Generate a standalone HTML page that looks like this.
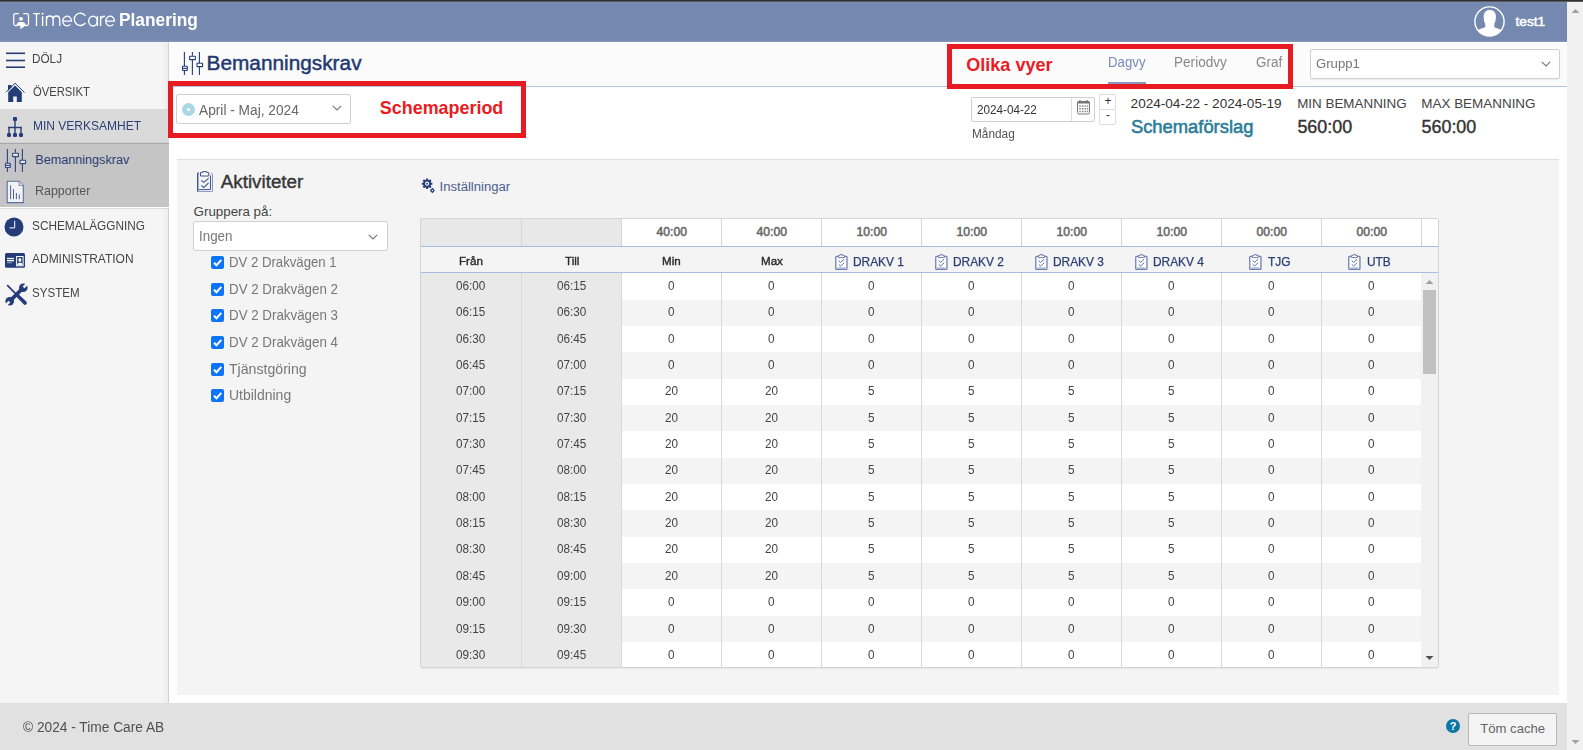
<!DOCTYPE html>
<html><head><meta charset="utf-8"><style>
html,body{margin:0;padding:0}
body{width:1583px;height:750px;overflow:hidden;position:relative;background:#fff;font-family:"Liberation Sans",sans-serif}
.t{position:absolute;white-space:nowrap;line-height:1}
div{box-sizing:content-box}
</style></head><body>
<div style="position:absolute;left:0px;top:0px;width:1583px;height:1px;background:#303030"></div>
<div style="position:absolute;left:0px;top:1px;width:1583px;height:1px;background:#5c5d60"></div>
<div style="position:absolute;left:0px;top:2px;width:1567px;height:40px;background:linear-gradient(#7b8db4 0px,#7589b0 1px,#7589b0 38px,#8193b6 39.5px,#dfe3ec 40px)"></div>
<div style="position:absolute;left:1567px;top:2px;width:16px;height:748px;background:#f1f1f1"></div>
<svg style="position:absolute;left:1571px;top:8px" width="9" height="6" viewBox="0 0 9 6"><path d="M0.5 5 L4.5 1 L8.5 5 Z" fill="#a3a3a3"/></svg>
<svg style="position:absolute;left:1571px;top:739px" width="9" height="6" viewBox="0 0 9 6"><path d="M0.5 1 L4.5 5 L8.5 1 Z" fill="#a3a3a3"/></svg>
<svg style="position:absolute;left:12px;top:12px" width="18" height="18" viewBox="0 0 18 18"><g fill="none" stroke="#fff" stroke-width="1.25"><path d="M6.8 1.7 H3.5 Q1.7 1.7 1.7 3.5 V11.7 Q1.7 13.5 3.5 13.5 H5"/><path d="M11.3 1.7 H14.7 Q16.5 1.7 16.5 3.5 V11.7 Q16.5 13.5 14.7 13.5 H13"/></g><circle cx="9" cy="6.8" r="1.9" fill="#fff"/><path d="M4.6 13.6 Q5.2 10 7.5 10 H10.5 Q12.8 10 13.8 13.3 L8.5 17.2 L8.3 13.6 Z" fill="#fff"/><path d="M4.6 12.9 H14" stroke="#fff" stroke-width="1.3"/></svg>
<svg style="position:absolute;left:30px;top:8px" width="90" height="24" viewBox="0 0 90 24"><g fill="none" stroke="#fff" stroke-width="1.35" stroke-linecap="butt"><path d="M3.1 5.6 H9.9 M6.5 5.6 V18"/><path d="M12.6 8.2 V18"/><path d="M16.5 8.2 V18 M16.5 11.8 Q16.5 8 19.8 8 Q23.1 8 23.1 11.8 V18 M23.1 11.8 Q23.1 8 26.4 8 Q29.7 8 29.7 11.8 V18"/><path d="M32.7 13.1 H41.5 A4.4 4.9 0 1 0 40.3 16.4"/><path d="M55.4 7.8 A6.1 6.15 0 1 0 55.4 14.9"/><ellipse cx="63" cy="13.1" rx="4.3" ry="4.9"/><path d="M67.4 8.2 V18"/><path d="M70.6 8.2 V18 M70.6 12 Q71 8.2 74.9 8.2"/><path d="M75.7 13.1 H84.5 A4.4 4.9 0 1 0 83.3 16.4"/></g><circle cx="12.6" cy="5.8" r="0.95" fill="#fff"/></svg>
<div class="t" style="left:118.50px;top:11.13px;font-size:18.16px;font-weight:700;color:#fff;transform:scaleX(0.9535);transform-origin:0 0;">Planering</div>
<svg style="position:absolute;left:1474px;top:6px" width="31" height="31" viewBox="0 0 31 31"><defs><clipPath id="cc"><circle cx="15.5" cy="15.5" r="14.5"/></clipPath></defs><circle cx="15.5" cy="15.5" r="14.6" fill="none" stroke="#fff" stroke-width="1.4"/><g clip-path="url(#cc)" fill="#fff"><path d="M15.8 4 C19.6 4 21.9 6.5 21.9 10.5 C21.9 13.5 21.4 15.8 20.4 17.6 L20.2 21.3 C23 22.5 27 23.2 29 25.7 L29 34 L2 34 L2 25.7 C4 23.2 8 22.5 11.3 21.3 L11.1 17.6 C10.1 15.8 9.7 13.5 9.7 10.5 C9.7 6.5 12 4 15.8 4 Z"/></g></svg>
<div class="t" style="left:1515.55px;top:15.00px;font-size:13.70px;font-weight:400;color:#fff;-webkit-text-stroke:0.50px #fff;">test1</div>
<div style="position:absolute;left:0px;top:42px;width:169px;height:661px;background:linear-gradient(to right,#f5f5f5 0px,#f5f5f5 162px,#ececec 168px,#d2d2d2 168px)"></div>
<div style="position:absolute;left:0px;top:109px;width:169px;height:33px;background:#dadada"></div>
<div style="position:absolute;left:0px;top:142px;width:169px;height:1px;background:#d0d0d0"></div>
<div style="position:absolute;left:0px;top:143px;width:169px;height:1px;background:#a9a9a9"></div>
<div style="position:absolute;left:0px;top:144px;width:169px;height:63px;background:#c5c5c5"></div>
<div style="position:absolute;left:0px;top:207px;width:169px;height:1px;background:#fdfdfd"></div>
<div style="position:absolute;left:0px;top:208px;width:168px;height:1px;background:#dcdcdc"></div>
<svg style="position:absolute;left:5px;top:51px" width="22" height="18" viewBox="0 0 22 18"><g stroke="#243d78" stroke-width="1.6"><path d="M1 2.3H20"/><path d="M1 9.5H20"/><path d="M1 16.2H20"/></g></svg>
<div class="t" style="left:32.40px;top:52.96px;font-size:12.57px;font-weight:400;color:#444;transform:scaleX(0.9341);transform-origin:0 0;">DÖLJ</div>
<svg style="position:absolute;left:5px;top:82px" width="21" height="21" viewBox="0 0 21 21"><path d="M10 1.2 L1 10.2" stroke="#243d78" stroke-width="1" fill="none"/><path d="M10 1.2 L19.5 10.5" stroke="#243d78" stroke-width="1" fill="none"/><path d="M3 3h3.5v2.6L3 9Z" fill="#243d78"/><path d="M3.2 10.2 L10 3.6 L16.8 10.2 V20 H11.8 V14.5 H8.2 V20 H3.2 Z" fill="#243d78"/></svg>
<div class="t" style="left:32.70px;top:85.76px;font-size:12.57px;font-weight:400;color:#444;transform:scaleX(0.8935);transform-origin:0 0;">ÖVERSIKT</div>
<svg style="position:absolute;left:6px;top:116px" width="19" height="22" viewBox="0 0 19 22"><g fill="#243d78"><rect x="7" y="1" width="4" height="4" rx="1"/><rect x="8.3" y="4" width="1.4" height="14"/><rect x="2.3" y="10.8" width="13.4" height="1.4"/><rect x="2.3" y="10.8" width="1.4" height="7"/><rect x="14.3" y="10.8" width="1.4" height="7"/><rect x="1" y="17" width="4" height="4" rx="1.3"/><rect x="7" y="17" width="4" height="4" rx="1.3"/><rect x="13" y="17" width="4" height="4" rx="1.3"/></g></svg>
<div class="t" style="left:32.70px;top:119.76px;font-size:12.57px;font-weight:400;color:#2b3f75;transform:scaleX(0.9547);transform-origin:0 0;">MIN VERKSAMHET</div>
<svg style="position:absolute;left:4px;top:148px" width="24" height="25" viewBox="0 0 24 25"><g stroke="#2d4580" stroke-width="1.1"><path d="M3.4 1v14M3.4 20v4"/><rect x="1.5" y="15.3" width="4.8" height="4.2" rx="0.4" fill="#e6e6e6"/><path d="M2 17.4H6"/><path d="M11.4 1v3.8M11.4 9v15"/><rect x="8.6" y="5.3" width="5.8" height="3.3" rx="0.4" fill="#e6e6e6"/><path d="M18.4 1v11M18.4 16v8"/><rect x="16" y="12.3" width="5.6" height="3.3" rx="0.4" fill="#e6e6e6"/></g></svg>
<div class="t" style="left:35.30px;top:153.92px;font-size:12.62px;font-weight:400;color:#2b3f75;">Bemanningskrav</div>
<svg style="position:absolute;left:6px;top:180px" width="19" height="24" viewBox="0 0 19 24"><path d="M1.2 1.2 H13 L17.3 5.5 V22.6 H1.2 Z" fill="#f2f2f2" stroke="#5b6fa3" stroke-width="1.1"/><path d="M13 1.2 V5.5 H17.3" fill="#dfe3ee" stroke="#5b6fa3" stroke-width="0.7"/><g stroke="#4a5f98" stroke-width="1"><path d="M4.6 5.3v13.9"/><path d="M7.5 9v10.2"/><path d="M10.4 13v6.2"/><path d="M13.3 14.5v4.7"/></g></svg>
<div class="t" style="left:35.30px;top:184.96px;font-size:12.57px;font-weight:400;color:#555;transform:scaleX(0.9910);transform-origin:0 0;">Rapporter</div>
<svg style="position:absolute;left:4px;top:217px" width="20" height="20" viewBox="0 0 20 20"><circle cx="10" cy="10" r="9.5" fill="#243d78"/><path d="M10.7 3.8 V10.9 H5.5" stroke="#fff" stroke-width="1" fill="none"/></svg>
<div class="t" style="left:32.30px;top:219.96px;font-size:12.57px;font-weight:400;color:#444;transform:scaleX(0.9406);transform-origin:0 0;">SCHEMALÄGGNING</div>
<svg style="position:absolute;left:5px;top:252px" width="20" height="17" viewBox="0 0 20 17"><rect x="0" y="1" width="20" height="14.7" rx="1.5" fill="#243d78"/><g fill="#fff"><rect x="2" y="5.9" width="7" height="1.3"/><rect x="2" y="8" width="7" height="1.3"/><rect x="2" y="10.2" width="5" height="1.1" fill-opacity="0.45"/></g><rect x="11.6" y="4.5" width="6.5" height="9.3" fill="none" stroke="#fff" stroke-width="1"/><ellipse cx="14.9" cy="7.9" rx="1.5" ry="1.9" fill="#fff"/><path d="M12.1 13.3 Q12.3 10.6 14.9 10.4 Q17.5 10.6 17.7 13.3 Z" fill="#fff"/></svg>
<div class="t" style="left:32.30px;top:253.06px;font-size:12.57px;font-weight:400;color:#444;transform:scaleX(0.9529);transform-origin:0 0;">ADMINISTRATION</div>
<svg style="position:absolute;left:5px;top:283px" width="23" height="23" viewBox="0 0 23 23"><defs><mask id="wm"><rect x="-2" y="-2" width="27" height="27" fill="#fff"/><path d="M17.65 3.51 L21.32 -0.16 L23.16 1.68 L19.49 5.35Z M3.51 17.65 L-0.16 21.32 L1.68 23.16 L5.35 19.49Z" fill="#000"/></mask></defs><g fill="#243d78"><path d="M1.6 2.8 L2.8 1.6 L12.2 11 L11 12.2 Z"/><path d="M11.2 13.6 L13.6 11.2 L21.3 18.6 Q22.6 20 21.3 21.3 Q20 22.6 18.6 21.3 Z"/><g mask="url(#wm)"><circle cx="18.3" cy="4.7" r="4.3"/><circle cx="4.7" cy="18.3" r="4.3"/><path d="M4.8 15.6 L15.6 4.8 L18.2 7.4 L7.4 18.2 Z"/></g></g></svg>
<div class="t" style="left:32.30px;top:287.26px;font-size:12.57px;font-weight:400;color:#444;transform:scaleX(0.9208);transform-origin:0 0;">SYSTEM</div>
<div style="position:absolute;left:169px;top:42px;width:1398px;height:44px;background:linear-gradient(#fff 0px,#fff 1px,#fbfbfb 1px)"></div>
<div style="position:absolute;left:169px;top:86px;width:1398px;height:1px;background:#b7c3dc"></div>
<svg style="position:absolute;left:181px;top:51px" width="24" height="25" viewBox="0 0 24 25"><g stroke="#243d78" stroke-width="1.1"><path d="M3.4 1v14M3.4 20v4"/><rect x="1.5" y="15.3" width="4.8" height="4.2" rx="0.4" fill="#fff"/><path d="M2 17.4H6"/><path d="M11.4 1v3.8M11.4 9v15"/><rect x="8.6" y="5.3" width="5.8" height="3.3" rx="0.4" fill="#fff"/><path d="M18.4 1v11M18.4 16v8"/><rect x="16" y="12.3" width="5.6" height="3.3" rx="0.4" fill="#fff"/></g></svg>
<div class="t" style="left:206.53px;top:53.18px;font-size:20.82px;font-weight:400;color:#22386f;-webkit-text-stroke:0.45px #22386f;">Bemanningskrav</div>
<div class="t" style="left:1108.30px;top:55.36px;font-size:14.11px;font-weight:400;color:#7a8bbd;transform:scaleX(0.9377);transform-origin:0 0;">Dagvy</div>
<div style="position:absolute;left:1108px;top:82px;width:38px;height:2px;background:#8797c0"></div>
<div class="t" style="left:1174.20px;top:55.36px;font-size:14.11px;font-weight:400;color:#888;transform:scaleX(0.9622);transform-origin:0 0;">Periodvy</div>
<div class="t" style="left:1255.70px;top:55.36px;font-size:14.11px;font-weight:400;color:#888;transform:scaleX(0.9573);transform-origin:0 0;">Graf</div>
<div style="position:absolute;left:1310px;top:49px;width:248px;height:28px;background:#fff;border:1px solid #d0d0d0;border-radius:2px;box-shadow:0 1px 1px rgba(0,0,0,0.06)"></div>
<div class="t" style="left:1315.80px;top:56.93px;font-size:13.55px;font-weight:400;color:#777;transform:scaleX(0.9694);transform-origin:0 0;">Grupp1</div>
<svg style="position:absolute;left:1541px;top:61px" width="10" height="6" viewBox="0 0 10 6"><path d="M0.8 0.8 L5 5 L9.2 0.8" fill="none" stroke="#777" stroke-width="1.2"/></svg>
<div class="t" style="left:966.20px;top:56.01px;font-size:18.07px;font-weight:700;color:#ea1b23;">Olika vyer</div>
<div style="position:absolute;left:176px;top:94px;width:173px;height:28px;background:#fff;border:1px solid #d0d0d0;border-radius:2px"></div>
<svg style="position:absolute;left:181px;top:102px" width="15" height="15" viewBox="0 0 15 15"><circle cx="7.5" cy="7.5" r="6.5" fill="#a9d7e5"/><circle cx="7.5" cy="7.5" r="1.6" fill="#fff"/></svg>
<div class="t" style="left:198.90px;top:102.56px;font-size:14.11px;font-weight:400;color:#666;transform:scaleX(0.9718);transform-origin:0 0;">April - Maj, 2024</div>
<svg style="position:absolute;left:332px;top:105px" width="10" height="6" viewBox="0 0 10 6"><path d="M0.8 0.8 L5 5 L9.2 0.8" fill="none" stroke="#777" stroke-width="1.2"/></svg>
<div class="t" style="left:379.80px;top:100.42px;font-size:17.93px;font-weight:700;color:#ea1b23;">Schemaperiod</div>
<div style="position:absolute;left:971px;top:97px;width:122px;height:23px;background:#fff;border:1px solid #d0d0d0;border-radius:2px"></div>
<div style="position:absolute;left:1071px;top:98px;width:1px;height:23px;background:#dcdcdc"></div>
<svg style="position:absolute;left:1076px;top:99px" width="15" height="17" viewBox="0 0 15 17"><g fill="none" stroke="#777" stroke-width="1"><rect x="1.5" y="2.5" width="12" height="12.5" rx="1.5"/></g><rect x="1.5" y="2.5" width="12" height="2" fill="#777"/><path d="M4 1v3M11 1v3" stroke="#777" stroke-width="1.2"/><g fill="#888"><rect x="3.2" y="6.3" width="1.6" height="1.5"/><rect x="5.9" y="6.3" width="1.6" height="1.5"/><rect x="8.6" y="6.3" width="1.6" height="1.5"/><rect x="11" y="6.3" width="1.2" height="1.5"/><rect x="3.2" y="9" width="1.6" height="1.5"/><rect x="5.9" y="9" width="1.6" height="1.5"/><rect x="8.6" y="9" width="1.6" height="1.5"/><rect x="11" y="9" width="1.2" height="1.5"/><rect x="3.2" y="11.7" width="1.6" height="1.5"/><rect x="5.9" y="11.7" width="1.6" height="1.5"/><rect x="8.6" y="11.7" width="1.6" height="1.5"/><rect x="11" y="11.7" width="1.2" height="1.5"/></g></svg>
<div class="t" style="left:977.00px;top:102.75px;font-size:13.41px;font-weight:400;color:#333;transform:scaleX(0.8720);transform-origin:0 0;">2024-04-22</div>
<div style="position:absolute;left:1099px;top:94px;width:15px;height:14px;background:#fff;border:1px solid #ddd;border-radius:2px"></div>
<div style="position:absolute;left:1099px;top:109px;width:15px;height:14px;background:#fff;border:1px solid #ddd;border-radius:2px"></div>
<div class="t" style="left:1104.49px;top:94.94px;font-size:12.00px;font-weight:400;color:#333;">+</div>
<div class="t" style="left:1106.01px;top:109.44px;font-size:12.00px;font-weight:400;color:#333;">-</div>
<div class="t" style="left:972.00px;top:127.68px;font-size:12.43px;font-weight:400;color:#555;transform:scaleX(0.9525);transform-origin:0 0;">Måndag</div>
<div class="t" style="left:1130.60px;top:96.91px;font-size:13.58px;font-weight:400;color:#333;">2024-04-22 - 2024-05-19</div>
<div class="t" style="left:1130.88px;top:118.03px;font-size:18.39px;font-weight:400;color:#2a7d99;-webkit-text-stroke:0.55px #2a7d99;">Schemaförslag</div>
<div class="t" style="left:1297.20px;top:97.25px;font-size:13.41px;font-weight:400;color:#444;">MIN BEMANNING</div>
<div class="t" style="left:1297.40px;top:119.23px;font-size:17.92px;font-weight:400;color:#333;-webkit-text-stroke:0.40px #333;">560:00</div>
<div class="t" style="left:1421.30px;top:97.23px;font-size:13.44px;font-weight:400;color:#444;">MAX BEMANNING</div>
<div class="t" style="left:1421.50px;top:119.23px;font-size:17.92px;font-weight:400;color:#333;-webkit-text-stroke:0.40px #333;">560:00</div>
<div style="position:absolute;left:168px;top:81px;width:348px;height:47px;border:5px solid #e81a22"></div>
<div style="position:absolute;left:947px;top:44px;width:336px;height:35px;border:5px solid #e81a22"></div>
<div style="position:absolute;left:177px;top:159px;width:1382px;height:535px;background:#f4f4f4;border-top:1px solid #dedede"></div>
<svg style="position:absolute;left:196px;top:171px" width="17" height="21" viewBox="0 0 17 21"><g fill="none" stroke-width="1"><path d="M1.7 20.6 V3 Q1.7 2 2.8 2" stroke="#3b5490" stroke-width="1.4"/><path d="M1.7 20.6 H15.8 Q16.5 20.6 16.5 19.8 V3.3 Q16.5 2.4 15.3 2.4" stroke="#3b5490" stroke-opacity="0.6"/><path d="M2.7 18.6 H14.5 V4.5" stroke="#3b5490"/><path d="M4.5 5 V1.6 H6.7 V0.6 H10.8 V1.6 H12.8 V5 Z" stroke="#3b5490" fill="#fff" fill-opacity="0.5"/><path d="M5.3 9.3 L7.8 11.4 L12.6 7.3 M5.3 14.4 L7.8 16.4 L12.6 11.9" stroke="#3b5490" stroke-width="1.1"/></g></svg>
<div class="t" style="left:220.80px;top:173.29px;font-size:18.79px;font-weight:400;color:#363636;-webkit-text-stroke:0.40px #363636;">Aktiviteter</div>
<div class="t" style="left:193.60px;top:205.41px;font-size:13.34px;font-weight:400;color:#444;">Gruppera på:</div>
<div style="position:absolute;left:193px;top:221px;width:193px;height:28px;background:#fff;border:1px solid #d0d0d0;border-radius:2px"></div>
<div class="t" style="left:198.90px;top:229.80px;font-size:13.83px;font-weight:400;color:#777;transform:scaleX(0.9682);transform-origin:0 0;">Ingen</div>
<svg style="position:absolute;left:368px;top:234px" width="10" height="6" viewBox="0 0 10 6"><path d="M0.8 0.8 L5 5 L9.2 0.8" fill="none" stroke="#777" stroke-width="1.2"/></svg>
<svg style="position:absolute;left:211px;top:256px" width="13" height="13" viewBox="0 0 13 13"><rect x="0" y="0" width="13" height="13" rx="2" fill="#0b74f8"/><path d="M3 6.7 L5.5 9.2 L10.3 3.8" fill="none" stroke="#fff" stroke-width="2"/></svg>
<div class="t" style="left:229.10px;top:255.17px;font-size:14.80px;font-weight:400;color:#777;transform:scaleX(0.8904);transform-origin:0 0;">DV 2 Drakvägen 1</div>
<svg style="position:absolute;left:211px;top:283px" width="13" height="13" viewBox="0 0 13 13"><rect x="0" y="0" width="13" height="13" rx="2" fill="#0b74f8"/><path d="M3 6.7 L5.5 9.2 L10.3 3.8" fill="none" stroke="#fff" stroke-width="2"/></svg>
<div class="t" style="left:229.10px;top:281.81px;font-size:14.80px;font-weight:400;color:#777;transform:scaleX(0.9012);transform-origin:0 0;">DV 2 Drakvägen 2</div>
<svg style="position:absolute;left:211px;top:309px" width="13" height="13" viewBox="0 0 13 13"><rect x="0" y="0" width="13" height="13" rx="2" fill="#0b74f8"/><path d="M3 6.7 L5.5 9.2 L10.3 3.8" fill="none" stroke="#fff" stroke-width="2"/></svg>
<div class="t" style="left:229.10px;top:308.45px;font-size:14.80px;font-weight:400;color:#777;transform:scaleX(0.9012);transform-origin:0 0;">DV 2 Drakvägen 3</div>
<svg style="position:absolute;left:211px;top:336px" width="13" height="13" viewBox="0 0 13 13"><rect x="0" y="0" width="13" height="13" rx="2" fill="#0b74f8"/><path d="M3 6.7 L5.5 9.2 L10.3 3.8" fill="none" stroke="#fff" stroke-width="2"/></svg>
<div class="t" style="left:229.10px;top:335.09px;font-size:14.80px;font-weight:400;color:#777;transform:scaleX(0.9012);transform-origin:0 0;">DV 2 Drakvägen 4</div>
<svg style="position:absolute;left:211px;top:363px" width="13" height="13" viewBox="0 0 13 13"><rect x="0" y="0" width="13" height="13" rx="2" fill="#0b74f8"/><path d="M3 6.7 L5.5 9.2 L10.3 3.8" fill="none" stroke="#fff" stroke-width="2"/></svg>
<div class="t" style="left:229.10px;top:361.73px;font-size:14.80px;font-weight:400;color:#777;transform:scaleX(0.9538);transform-origin:0 0;">Tjänstgöring</div>
<svg style="position:absolute;left:211px;top:389px" width="13" height="13" viewBox="0 0 13 13"><rect x="0" y="0" width="13" height="13" rx="2" fill="#0b74f8"/><path d="M3 6.7 L5.5 9.2 L10.3 3.8" fill="none" stroke="#fff" stroke-width="2"/></svg>
<div class="t" style="left:229.10px;top:388.37px;font-size:14.80px;font-weight:400;color:#777;transform:scaleX(0.9447);transform-origin:0 0;">Utbildning</div>
<svg style="position:absolute;left:421px;top:178px" width="16" height="16" viewBox="0 0 16 16"><g fill="#243d78"><circle cx="6.1" cy="5.7" r="3.9"/><g stroke="#243d78" stroke-width="2"><path d="M6.1 0.4v10.6M0.8 5.7h10.6M2.35 1.95l7.5 7.5M9.85 1.95l-7.5 7.5"/></g></g><circle cx="6.1" cy="5.7" r="2.1" fill="#f4f4f4"/><circle cx="6.1" cy="5.7" r="0.9" fill="#243d78"/><g fill="#243d78"><path d="M11.4 9.7 L13.7 12.5 L11.4 15.3 L9.1 12.5 Z"/><circle cx="11.4" cy="12.5" r="1.9"/></g><circle cx="11.4" cy="12.5" r="0.8" fill="#f4f4f4"/></svg>
<div class="t" style="left:439.50px;top:179.70px;font-size:13.11px;font-weight:400;color:#4a5d8e;">Inställningar</div>
<div style="position:absolute;left:420px;top:218px;width:1019px;height:450px;background:#fff"></div>
<div style="position:absolute;left:420px;top:218px;width:201px;height:28px;background:#e8e8e8"></div>
<div style="position:absolute;left:521px;top:218px;width:1px;height:28px;background:#d6d6d6"></div>
<div style="position:absolute;left:621px;top:218px;width:1px;height:28px;background:#d6d6d6"></div>
<div style="position:absolute;left:721px;top:218px;width:1px;height:28px;background:#d6d6d6"></div>
<div style="position:absolute;left:821px;top:218px;width:1px;height:28px;background:#d6d6d6"></div>
<div style="position:absolute;left:921px;top:218px;width:1px;height:28px;background:#d6d6d6"></div>
<div style="position:absolute;left:1021px;top:218px;width:1px;height:28px;background:#d6d6d6"></div>
<div style="position:absolute;left:1121px;top:218px;width:1px;height:28px;background:#d6d6d6"></div>
<div style="position:absolute;left:1221px;top:218px;width:1px;height:28px;background:#d6d6d6"></div>
<div style="position:absolute;left:1321px;top:218px;width:1px;height:28px;background:#d6d6d6"></div>
<div style="position:absolute;left:1421px;top:218px;width:1px;height:28px;background:#d6d6d6"></div>
<div class="t" style="left:656.48px;top:226.07px;font-size:12.20px;font-weight:400;color:#666;-webkit-text-stroke:0.50px #666;">40:00</div>
<div class="t" style="left:756.48px;top:226.07px;font-size:12.20px;font-weight:400;color:#666;-webkit-text-stroke:0.50px #666;">40:00</div>
<div class="t" style="left:856.48px;top:226.07px;font-size:12.20px;font-weight:400;color:#666;-webkit-text-stroke:0.50px #666;">10:00</div>
<div class="t" style="left:956.48px;top:226.07px;font-size:12.20px;font-weight:400;color:#666;-webkit-text-stroke:0.50px #666;">10:00</div>
<div class="t" style="left:1056.48px;top:226.07px;font-size:12.20px;font-weight:400;color:#666;-webkit-text-stroke:0.50px #666;">10:00</div>
<div class="t" style="left:1156.48px;top:226.07px;font-size:12.20px;font-weight:400;color:#666;-webkit-text-stroke:0.50px #666;">10:00</div>
<div class="t" style="left:1256.48px;top:226.07px;font-size:12.20px;font-weight:400;color:#666;-webkit-text-stroke:0.50px #666;">00:00</div>
<div class="t" style="left:1356.48px;top:226.07px;font-size:12.20px;font-weight:400;color:#666;-webkit-text-stroke:0.50px #666;">00:00</div>
<div style="position:absolute;left:420px;top:246px;width:1019px;height:1px;background:#a8bbe0"></div>
<div style="position:absolute;left:420px;top:247px;width:1019px;height:25px;background:#f4f4f4"></div>
<div style="position:absolute;left:420px;top:272px;width:1019px;height:1px;background:#a8bbe0"></div>
<div class="t" style="left:459.28px;top:255.17px;font-size:11.73px;font-weight:400;color:#2a2a2a;-webkit-text-stroke:0.40px #2a2a2a;transform:scaleX(0.9888);transform-origin:0 0;">Från</div>
<div class="t" style="left:564.51px;top:255.17px;font-size:11.73px;font-weight:400;color:#2a2a2a;-webkit-text-stroke:0.40px #2a2a2a;transform:scaleX(0.9888);transform-origin:0 0;">Till</div>
<div class="t" style="left:662.35px;top:255.17px;font-size:11.73px;font-weight:400;color:#2a2a2a;-webkit-text-stroke:0.40px #2a2a2a;transform:scaleX(0.9888);transform-origin:0 0;">Min</div>
<div class="t" style="left:760.74px;top:255.17px;font-size:11.73px;font-weight:400;color:#2a2a2a;-webkit-text-stroke:0.40px #2a2a2a;transform:scaleX(0.9888);transform-origin:0 0;">Max</div>
<svg style="position:absolute;left:834.5px;top:254px" width="13" height="16" viewBox="0 0 13 16"><rect x="0.75" y="2.4" width="11.2" height="13" rx="0.8" fill="#fff" stroke="#6d80b0" stroke-width="1.3"/><path d="M2.3 14 H10.4" stroke="#6d80b0" stroke-width="0.8" fill="none"/><path d="M3.3 3.6 V1.6 H5 V0.65 H7.7 V1.6 H9.4 V3.6 Z" fill="#fff" stroke="#6d80b0" stroke-width="1"/><path d="M3.7 6.7 L5.6 8.4 L9.1 5.2 M3.7 10.3 L5.6 12 L9.1 8.8" fill="none" stroke="#4b5f96" stroke-width="0.9"/></svg>
<div class="t" style="left:853.31px;top:255.87px;font-size:12.08px;font-weight:400;color:#2b3f75;-webkit-text-stroke:0.25px #2b3f75;transform:scaleX(0.9850);transform-origin:0 0;">DRAKV 1</div>
<svg style="position:absolute;left:934.5px;top:254px" width="13" height="16" viewBox="0 0 13 16"><rect x="0.75" y="2.4" width="11.2" height="13" rx="0.8" fill="#fff" stroke="#6d80b0" stroke-width="1.3"/><path d="M2.3 14 H10.4" stroke="#6d80b0" stroke-width="0.8" fill="none"/><path d="M3.3 3.6 V1.6 H5 V0.65 H7.7 V1.6 H9.4 V3.6 Z" fill="#fff" stroke="#6d80b0" stroke-width="1"/><path d="M3.7 6.7 L5.6 8.4 L9.1 5.2 M3.7 10.3 L5.6 12 L9.1 8.8" fill="none" stroke="#4b5f96" stroke-width="0.9"/></svg>
<div class="t" style="left:953.31px;top:255.87px;font-size:12.08px;font-weight:400;color:#2b3f75;-webkit-text-stroke:0.25px #2b3f75;transform:scaleX(0.9850);transform-origin:0 0;">DRAKV 2</div>
<svg style="position:absolute;left:1034.5px;top:254px" width="13" height="16" viewBox="0 0 13 16"><rect x="0.75" y="2.4" width="11.2" height="13" rx="0.8" fill="#fff" stroke="#6d80b0" stroke-width="1.3"/><path d="M2.3 14 H10.4" stroke="#6d80b0" stroke-width="0.8" fill="none"/><path d="M3.3 3.6 V1.6 H5 V0.65 H7.7 V1.6 H9.4 V3.6 Z" fill="#fff" stroke="#6d80b0" stroke-width="1"/><path d="M3.7 6.7 L5.6 8.4 L9.1 5.2 M3.7 10.3 L5.6 12 L9.1 8.8" fill="none" stroke="#4b5f96" stroke-width="0.9"/></svg>
<div class="t" style="left:1053.31px;top:255.87px;font-size:12.08px;font-weight:400;color:#2b3f75;-webkit-text-stroke:0.25px #2b3f75;transform:scaleX(0.9850);transform-origin:0 0;">DRAKV 3</div>
<svg style="position:absolute;left:1134.5px;top:254px" width="13" height="16" viewBox="0 0 13 16"><rect x="0.75" y="2.4" width="11.2" height="13" rx="0.8" fill="#fff" stroke="#6d80b0" stroke-width="1.3"/><path d="M2.3 14 H10.4" stroke="#6d80b0" stroke-width="0.8" fill="none"/><path d="M3.3 3.6 V1.6 H5 V0.65 H7.7 V1.6 H9.4 V3.6 Z" fill="#fff" stroke="#6d80b0" stroke-width="1"/><path d="M3.7 6.7 L5.6 8.4 L9.1 5.2 M3.7 10.3 L5.6 12 L9.1 8.8" fill="none" stroke="#4b5f96" stroke-width="0.9"/></svg>
<div class="t" style="left:1153.31px;top:255.87px;font-size:12.08px;font-weight:400;color:#2b3f75;-webkit-text-stroke:0.25px #2b3f75;transform:scaleX(0.9850);transform-origin:0 0;">DRAKV 4</div>
<svg style="position:absolute;left:1248.5px;top:254px" width="13" height="16" viewBox="0 0 13 16"><rect x="0.75" y="2.4" width="11.2" height="13" rx="0.8" fill="#fff" stroke="#6d80b0" stroke-width="1.3"/><path d="M2.3 14 H10.4" stroke="#6d80b0" stroke-width="0.8" fill="none"/><path d="M3.3 3.6 V1.6 H5 V0.65 H7.7 V1.6 H9.4 V3.6 Z" fill="#fff" stroke="#6d80b0" stroke-width="1"/><path d="M3.7 6.7 L5.6 8.4 L9.1 5.2 M3.7 10.3 L5.6 12 L9.1 8.8" fill="none" stroke="#4b5f96" stroke-width="0.9"/></svg>
<div class="t" style="left:1267.54px;top:255.87px;font-size:12.08px;font-weight:400;color:#2b3f75;-webkit-text-stroke:0.25px #2b3f75;transform:scaleX(0.9850);transform-origin:0 0;">TJG</div>
<svg style="position:absolute;left:1348.0px;top:254px" width="13" height="16" viewBox="0 0 13 16"><rect x="0.75" y="2.4" width="11.2" height="13" rx="0.8" fill="#fff" stroke="#6d80b0" stroke-width="1.3"/><path d="M2.3 14 H10.4" stroke="#6d80b0" stroke-width="0.8" fill="none"/><path d="M3.3 3.6 V1.6 H5 V0.65 H7.7 V1.6 H9.4 V3.6 Z" fill="#fff" stroke="#6d80b0" stroke-width="1"/><path d="M3.7 6.7 L5.6 8.4 L9.1 5.2 M3.7 10.3 L5.6 12 L9.1 8.8" fill="none" stroke="#4b5f96" stroke-width="0.9"/></svg>
<div class="t" style="left:1366.88px;top:255.87px;font-size:12.08px;font-weight:400;color:#2b3f75;-webkit-text-stroke:0.25px #2b3f75;transform:scaleX(0.9850);transform-origin:0 0;">UTB</div>
<div style="position:absolute;left:621px;top:273.20px;width:800px;height:26.35px;background:#ffffff"></div>
<div style="position:absolute;left:621px;top:299.55px;width:800px;height:26.35px;background:#f4f4f4"></div>
<div style="position:absolute;left:621px;top:325.90px;width:800px;height:26.35px;background:#ffffff"></div>
<div style="position:absolute;left:621px;top:352.25px;width:800px;height:26.35px;background:#f4f4f4"></div>
<div style="position:absolute;left:621px;top:378.60px;width:800px;height:26.35px;background:#ffffff"></div>
<div style="position:absolute;left:621px;top:404.95px;width:800px;height:26.35px;background:#f4f4f4"></div>
<div style="position:absolute;left:621px;top:431.30px;width:800px;height:26.35px;background:#ffffff"></div>
<div style="position:absolute;left:621px;top:457.65px;width:800px;height:26.35px;background:#f4f4f4"></div>
<div style="position:absolute;left:621px;top:484.00px;width:800px;height:26.35px;background:#ffffff"></div>
<div style="position:absolute;left:621px;top:510.35px;width:800px;height:26.35px;background:#f4f4f4"></div>
<div style="position:absolute;left:621px;top:536.70px;width:800px;height:26.35px;background:#ffffff"></div>
<div style="position:absolute;left:621px;top:563.05px;width:800px;height:26.35px;background:#f4f4f4"></div>
<div style="position:absolute;left:621px;top:589.40px;width:800px;height:26.35px;background:#ffffff"></div>
<div style="position:absolute;left:621px;top:615.75px;width:800px;height:26.35px;background:#f4f4f4"></div>
<div style="position:absolute;left:621px;top:642.10px;width:800px;height:24.90px;background:#ffffff"></div>
<div style="position:absolute;left:420px;top:273px;width:201px;height:394px;background:#e9e9e9"></div>
<div style="position:absolute;left:521px;top:273px;width:1px;height:394px;background:#d9d9d9"></div>
<div style="position:absolute;left:621px;top:273px;width:1px;height:394px;background:#d9d9d9"></div>
<div style="position:absolute;left:721px;top:273px;width:1px;height:394px;background:#d9d9d9"></div>
<div style="position:absolute;left:821px;top:273px;width:1px;height:394px;background:#d9d9d9"></div>
<div style="position:absolute;left:921px;top:273px;width:1px;height:394px;background:#d9d9d9"></div>
<div style="position:absolute;left:1021px;top:273px;width:1px;height:394px;background:#d9d9d9"></div>
<div style="position:absolute;left:1121px;top:273px;width:1px;height:394px;background:#d9d9d9"></div>
<div style="position:absolute;left:1221px;top:273px;width:1px;height:394px;background:#d9d9d9"></div>
<div style="position:absolute;left:1321px;top:273px;width:1px;height:394px;background:#d9d9d9"></div>
<div style="position:absolute;left:1421px;top:273px;width:1px;height:394px;background:#d9d9d9"></div>
<div style="position:absolute;left:1421px;top:273px;width:17px;height:394px;background:#f1f1f1"></div>
<svg style="position:absolute;left:1425px;top:279px" width="9" height="6" viewBox="0 0 9 6"><path d="M0.5 5 L4.5 1 L8.5 5 Z" fill="#a3a3a3"/></svg>
<div style="position:absolute;left:1423px;top:290px;width:13px;height:84px;background:#c1c1c1"></div>
<svg style="position:absolute;left:1425px;top:655px" width="9" height="6" viewBox="0 0 9 6"><path d="M0.5 1 L4.5 5 L8.5 1 Z" fill="#505050"/></svg>
<div class="t" style="left:456.34px;top:279.96px;font-size:12.57px;font-weight:400;color:#444;transform:scaleX(0.9324);transform-origin:0 0;">06:00</div>
<div class="t" style="left:556.84px;top:279.96px;font-size:12.57px;font-weight:400;color:#444;transform:scaleX(0.9324);transform-origin:0 0;">06:15</div>
<div class="t" style="left:668.25px;top:279.96px;font-size:12.57px;font-weight:400;color:#444;transform:scaleX(0.9324);transform-origin:0 0;">0</div>
<div class="t" style="left:768.25px;top:279.96px;font-size:12.57px;font-weight:400;color:#444;transform:scaleX(0.9324);transform-origin:0 0;">0</div>
<div class="t" style="left:868.25px;top:279.96px;font-size:12.57px;font-weight:400;color:#444;transform:scaleX(0.9324);transform-origin:0 0;">0</div>
<div class="t" style="left:968.25px;top:279.96px;font-size:12.57px;font-weight:400;color:#444;transform:scaleX(0.9324);transform-origin:0 0;">0</div>
<div class="t" style="left:1068.25px;top:279.96px;font-size:12.57px;font-weight:400;color:#444;transform:scaleX(0.9324);transform-origin:0 0;">0</div>
<div class="t" style="left:1168.25px;top:279.96px;font-size:12.57px;font-weight:400;color:#444;transform:scaleX(0.9324);transform-origin:0 0;">0</div>
<div class="t" style="left:1268.25px;top:279.96px;font-size:12.57px;font-weight:400;color:#444;transform:scaleX(0.9324);transform-origin:0 0;">0</div>
<div class="t" style="left:1368.25px;top:279.96px;font-size:12.57px;font-weight:400;color:#444;transform:scaleX(0.9324);transform-origin:0 0;">0</div>
<div class="t" style="left:456.34px;top:306.31px;font-size:12.57px;font-weight:400;color:#444;transform:scaleX(0.9324);transform-origin:0 0;">06:15</div>
<div class="t" style="left:556.84px;top:306.31px;font-size:12.57px;font-weight:400;color:#444;transform:scaleX(0.9324);transform-origin:0 0;">06:30</div>
<div class="t" style="left:668.25px;top:306.31px;font-size:12.57px;font-weight:400;color:#444;transform:scaleX(0.9324);transform-origin:0 0;">0</div>
<div class="t" style="left:768.25px;top:306.31px;font-size:12.57px;font-weight:400;color:#444;transform:scaleX(0.9324);transform-origin:0 0;">0</div>
<div class="t" style="left:868.25px;top:306.31px;font-size:12.57px;font-weight:400;color:#444;transform:scaleX(0.9324);transform-origin:0 0;">0</div>
<div class="t" style="left:968.25px;top:306.31px;font-size:12.57px;font-weight:400;color:#444;transform:scaleX(0.9324);transform-origin:0 0;">0</div>
<div class="t" style="left:1068.25px;top:306.31px;font-size:12.57px;font-weight:400;color:#444;transform:scaleX(0.9324);transform-origin:0 0;">0</div>
<div class="t" style="left:1168.25px;top:306.31px;font-size:12.57px;font-weight:400;color:#444;transform:scaleX(0.9324);transform-origin:0 0;">0</div>
<div class="t" style="left:1268.25px;top:306.31px;font-size:12.57px;font-weight:400;color:#444;transform:scaleX(0.9324);transform-origin:0 0;">0</div>
<div class="t" style="left:1368.25px;top:306.31px;font-size:12.57px;font-weight:400;color:#444;transform:scaleX(0.9324);transform-origin:0 0;">0</div>
<div class="t" style="left:456.34px;top:332.66px;font-size:12.57px;font-weight:400;color:#444;transform:scaleX(0.9324);transform-origin:0 0;">06:30</div>
<div class="t" style="left:556.84px;top:332.66px;font-size:12.57px;font-weight:400;color:#444;transform:scaleX(0.9324);transform-origin:0 0;">06:45</div>
<div class="t" style="left:668.25px;top:332.66px;font-size:12.57px;font-weight:400;color:#444;transform:scaleX(0.9324);transform-origin:0 0;">0</div>
<div class="t" style="left:768.25px;top:332.66px;font-size:12.57px;font-weight:400;color:#444;transform:scaleX(0.9324);transform-origin:0 0;">0</div>
<div class="t" style="left:868.25px;top:332.66px;font-size:12.57px;font-weight:400;color:#444;transform:scaleX(0.9324);transform-origin:0 0;">0</div>
<div class="t" style="left:968.25px;top:332.66px;font-size:12.57px;font-weight:400;color:#444;transform:scaleX(0.9324);transform-origin:0 0;">0</div>
<div class="t" style="left:1068.25px;top:332.66px;font-size:12.57px;font-weight:400;color:#444;transform:scaleX(0.9324);transform-origin:0 0;">0</div>
<div class="t" style="left:1168.25px;top:332.66px;font-size:12.57px;font-weight:400;color:#444;transform:scaleX(0.9324);transform-origin:0 0;">0</div>
<div class="t" style="left:1268.25px;top:332.66px;font-size:12.57px;font-weight:400;color:#444;transform:scaleX(0.9324);transform-origin:0 0;">0</div>
<div class="t" style="left:1368.25px;top:332.66px;font-size:12.57px;font-weight:400;color:#444;transform:scaleX(0.9324);transform-origin:0 0;">0</div>
<div class="t" style="left:456.34px;top:359.01px;font-size:12.57px;font-weight:400;color:#444;transform:scaleX(0.9324);transform-origin:0 0;">06:45</div>
<div class="t" style="left:556.84px;top:359.01px;font-size:12.57px;font-weight:400;color:#444;transform:scaleX(0.9324);transform-origin:0 0;">07:00</div>
<div class="t" style="left:668.25px;top:359.01px;font-size:12.57px;font-weight:400;color:#444;transform:scaleX(0.9324);transform-origin:0 0;">0</div>
<div class="t" style="left:768.25px;top:359.01px;font-size:12.57px;font-weight:400;color:#444;transform:scaleX(0.9324);transform-origin:0 0;">0</div>
<div class="t" style="left:868.25px;top:359.01px;font-size:12.57px;font-weight:400;color:#444;transform:scaleX(0.9324);transform-origin:0 0;">0</div>
<div class="t" style="left:968.25px;top:359.01px;font-size:12.57px;font-weight:400;color:#444;transform:scaleX(0.9324);transform-origin:0 0;">0</div>
<div class="t" style="left:1068.25px;top:359.01px;font-size:12.57px;font-weight:400;color:#444;transform:scaleX(0.9324);transform-origin:0 0;">0</div>
<div class="t" style="left:1168.25px;top:359.01px;font-size:12.57px;font-weight:400;color:#444;transform:scaleX(0.9324);transform-origin:0 0;">0</div>
<div class="t" style="left:1268.25px;top:359.01px;font-size:12.57px;font-weight:400;color:#444;transform:scaleX(0.9324);transform-origin:0 0;">0</div>
<div class="t" style="left:1368.25px;top:359.01px;font-size:12.57px;font-weight:400;color:#444;transform:scaleX(0.9324);transform-origin:0 0;">0</div>
<div class="t" style="left:456.34px;top:385.36px;font-size:12.57px;font-weight:400;color:#444;transform:scaleX(0.9324);transform-origin:0 0;">07:00</div>
<div class="t" style="left:556.84px;top:385.36px;font-size:12.57px;font-weight:400;color:#444;transform:scaleX(0.9324);transform-origin:0 0;">07:15</div>
<div class="t" style="left:664.98px;top:385.36px;font-size:12.57px;font-weight:400;color:#444;transform:scaleX(0.9324);transform-origin:0 0;">20</div>
<div class="t" style="left:764.98px;top:385.36px;font-size:12.57px;font-weight:400;color:#444;transform:scaleX(0.9324);transform-origin:0 0;">20</div>
<div class="t" style="left:868.25px;top:385.36px;font-size:12.57px;font-weight:400;color:#444;transform:scaleX(0.9324);transform-origin:0 0;">5</div>
<div class="t" style="left:968.25px;top:385.36px;font-size:12.57px;font-weight:400;color:#444;transform:scaleX(0.9324);transform-origin:0 0;">5</div>
<div class="t" style="left:1068.25px;top:385.36px;font-size:12.57px;font-weight:400;color:#444;transform:scaleX(0.9324);transform-origin:0 0;">5</div>
<div class="t" style="left:1168.25px;top:385.36px;font-size:12.57px;font-weight:400;color:#444;transform:scaleX(0.9324);transform-origin:0 0;">5</div>
<div class="t" style="left:1268.25px;top:385.36px;font-size:12.57px;font-weight:400;color:#444;transform:scaleX(0.9324);transform-origin:0 0;">0</div>
<div class="t" style="left:1368.25px;top:385.36px;font-size:12.57px;font-weight:400;color:#444;transform:scaleX(0.9324);transform-origin:0 0;">0</div>
<div class="t" style="left:456.34px;top:411.71px;font-size:12.57px;font-weight:400;color:#444;transform:scaleX(0.9324);transform-origin:0 0;">07:15</div>
<div class="t" style="left:556.84px;top:411.71px;font-size:12.57px;font-weight:400;color:#444;transform:scaleX(0.9324);transform-origin:0 0;">07:30</div>
<div class="t" style="left:664.98px;top:411.71px;font-size:12.57px;font-weight:400;color:#444;transform:scaleX(0.9324);transform-origin:0 0;">20</div>
<div class="t" style="left:764.98px;top:411.71px;font-size:12.57px;font-weight:400;color:#444;transform:scaleX(0.9324);transform-origin:0 0;">20</div>
<div class="t" style="left:868.25px;top:411.71px;font-size:12.57px;font-weight:400;color:#444;transform:scaleX(0.9324);transform-origin:0 0;">5</div>
<div class="t" style="left:968.25px;top:411.71px;font-size:12.57px;font-weight:400;color:#444;transform:scaleX(0.9324);transform-origin:0 0;">5</div>
<div class="t" style="left:1068.25px;top:411.71px;font-size:12.57px;font-weight:400;color:#444;transform:scaleX(0.9324);transform-origin:0 0;">5</div>
<div class="t" style="left:1168.25px;top:411.71px;font-size:12.57px;font-weight:400;color:#444;transform:scaleX(0.9324);transform-origin:0 0;">5</div>
<div class="t" style="left:1268.25px;top:411.71px;font-size:12.57px;font-weight:400;color:#444;transform:scaleX(0.9324);transform-origin:0 0;">0</div>
<div class="t" style="left:1368.25px;top:411.71px;font-size:12.57px;font-weight:400;color:#444;transform:scaleX(0.9324);transform-origin:0 0;">0</div>
<div class="t" style="left:456.34px;top:438.06px;font-size:12.57px;font-weight:400;color:#444;transform:scaleX(0.9324);transform-origin:0 0;">07:30</div>
<div class="t" style="left:556.84px;top:438.06px;font-size:12.57px;font-weight:400;color:#444;transform:scaleX(0.9324);transform-origin:0 0;">07:45</div>
<div class="t" style="left:664.98px;top:438.06px;font-size:12.57px;font-weight:400;color:#444;transform:scaleX(0.9324);transform-origin:0 0;">20</div>
<div class="t" style="left:764.98px;top:438.06px;font-size:12.57px;font-weight:400;color:#444;transform:scaleX(0.9324);transform-origin:0 0;">20</div>
<div class="t" style="left:868.25px;top:438.06px;font-size:12.57px;font-weight:400;color:#444;transform:scaleX(0.9324);transform-origin:0 0;">5</div>
<div class="t" style="left:968.25px;top:438.06px;font-size:12.57px;font-weight:400;color:#444;transform:scaleX(0.9324);transform-origin:0 0;">5</div>
<div class="t" style="left:1068.25px;top:438.06px;font-size:12.57px;font-weight:400;color:#444;transform:scaleX(0.9324);transform-origin:0 0;">5</div>
<div class="t" style="left:1168.25px;top:438.06px;font-size:12.57px;font-weight:400;color:#444;transform:scaleX(0.9324);transform-origin:0 0;">5</div>
<div class="t" style="left:1268.25px;top:438.06px;font-size:12.57px;font-weight:400;color:#444;transform:scaleX(0.9324);transform-origin:0 0;">0</div>
<div class="t" style="left:1368.25px;top:438.06px;font-size:12.57px;font-weight:400;color:#444;transform:scaleX(0.9324);transform-origin:0 0;">0</div>
<div class="t" style="left:456.34px;top:464.41px;font-size:12.57px;font-weight:400;color:#444;transform:scaleX(0.9324);transform-origin:0 0;">07:45</div>
<div class="t" style="left:556.84px;top:464.41px;font-size:12.57px;font-weight:400;color:#444;transform:scaleX(0.9324);transform-origin:0 0;">08:00</div>
<div class="t" style="left:664.98px;top:464.41px;font-size:12.57px;font-weight:400;color:#444;transform:scaleX(0.9324);transform-origin:0 0;">20</div>
<div class="t" style="left:764.98px;top:464.41px;font-size:12.57px;font-weight:400;color:#444;transform:scaleX(0.9324);transform-origin:0 0;">20</div>
<div class="t" style="left:868.25px;top:464.41px;font-size:12.57px;font-weight:400;color:#444;transform:scaleX(0.9324);transform-origin:0 0;">5</div>
<div class="t" style="left:968.25px;top:464.41px;font-size:12.57px;font-weight:400;color:#444;transform:scaleX(0.9324);transform-origin:0 0;">5</div>
<div class="t" style="left:1068.25px;top:464.41px;font-size:12.57px;font-weight:400;color:#444;transform:scaleX(0.9324);transform-origin:0 0;">5</div>
<div class="t" style="left:1168.25px;top:464.41px;font-size:12.57px;font-weight:400;color:#444;transform:scaleX(0.9324);transform-origin:0 0;">5</div>
<div class="t" style="left:1268.25px;top:464.41px;font-size:12.57px;font-weight:400;color:#444;transform:scaleX(0.9324);transform-origin:0 0;">0</div>
<div class="t" style="left:1368.25px;top:464.41px;font-size:12.57px;font-weight:400;color:#444;transform:scaleX(0.9324);transform-origin:0 0;">0</div>
<div class="t" style="left:456.34px;top:490.76px;font-size:12.57px;font-weight:400;color:#444;transform:scaleX(0.9324);transform-origin:0 0;">08:00</div>
<div class="t" style="left:556.84px;top:490.76px;font-size:12.57px;font-weight:400;color:#444;transform:scaleX(0.9324);transform-origin:0 0;">08:15</div>
<div class="t" style="left:664.98px;top:490.76px;font-size:12.57px;font-weight:400;color:#444;transform:scaleX(0.9324);transform-origin:0 0;">20</div>
<div class="t" style="left:764.98px;top:490.76px;font-size:12.57px;font-weight:400;color:#444;transform:scaleX(0.9324);transform-origin:0 0;">20</div>
<div class="t" style="left:868.25px;top:490.76px;font-size:12.57px;font-weight:400;color:#444;transform:scaleX(0.9324);transform-origin:0 0;">5</div>
<div class="t" style="left:968.25px;top:490.76px;font-size:12.57px;font-weight:400;color:#444;transform:scaleX(0.9324);transform-origin:0 0;">5</div>
<div class="t" style="left:1068.25px;top:490.76px;font-size:12.57px;font-weight:400;color:#444;transform:scaleX(0.9324);transform-origin:0 0;">5</div>
<div class="t" style="left:1168.25px;top:490.76px;font-size:12.57px;font-weight:400;color:#444;transform:scaleX(0.9324);transform-origin:0 0;">5</div>
<div class="t" style="left:1268.25px;top:490.76px;font-size:12.57px;font-weight:400;color:#444;transform:scaleX(0.9324);transform-origin:0 0;">0</div>
<div class="t" style="left:1368.25px;top:490.76px;font-size:12.57px;font-weight:400;color:#444;transform:scaleX(0.9324);transform-origin:0 0;">0</div>
<div class="t" style="left:456.34px;top:517.11px;font-size:12.57px;font-weight:400;color:#444;transform:scaleX(0.9324);transform-origin:0 0;">08:15</div>
<div class="t" style="left:556.84px;top:517.11px;font-size:12.57px;font-weight:400;color:#444;transform:scaleX(0.9324);transform-origin:0 0;">08:30</div>
<div class="t" style="left:664.98px;top:517.11px;font-size:12.57px;font-weight:400;color:#444;transform:scaleX(0.9324);transform-origin:0 0;">20</div>
<div class="t" style="left:764.98px;top:517.11px;font-size:12.57px;font-weight:400;color:#444;transform:scaleX(0.9324);transform-origin:0 0;">20</div>
<div class="t" style="left:868.25px;top:517.11px;font-size:12.57px;font-weight:400;color:#444;transform:scaleX(0.9324);transform-origin:0 0;">5</div>
<div class="t" style="left:968.25px;top:517.11px;font-size:12.57px;font-weight:400;color:#444;transform:scaleX(0.9324);transform-origin:0 0;">5</div>
<div class="t" style="left:1068.25px;top:517.11px;font-size:12.57px;font-weight:400;color:#444;transform:scaleX(0.9324);transform-origin:0 0;">5</div>
<div class="t" style="left:1168.25px;top:517.11px;font-size:12.57px;font-weight:400;color:#444;transform:scaleX(0.9324);transform-origin:0 0;">5</div>
<div class="t" style="left:1268.25px;top:517.11px;font-size:12.57px;font-weight:400;color:#444;transform:scaleX(0.9324);transform-origin:0 0;">0</div>
<div class="t" style="left:1368.25px;top:517.11px;font-size:12.57px;font-weight:400;color:#444;transform:scaleX(0.9324);transform-origin:0 0;">0</div>
<div class="t" style="left:456.34px;top:543.46px;font-size:12.57px;font-weight:400;color:#444;transform:scaleX(0.9324);transform-origin:0 0;">08:30</div>
<div class="t" style="left:556.84px;top:543.46px;font-size:12.57px;font-weight:400;color:#444;transform:scaleX(0.9324);transform-origin:0 0;">08:45</div>
<div class="t" style="left:664.98px;top:543.46px;font-size:12.57px;font-weight:400;color:#444;transform:scaleX(0.9324);transform-origin:0 0;">20</div>
<div class="t" style="left:764.98px;top:543.46px;font-size:12.57px;font-weight:400;color:#444;transform:scaleX(0.9324);transform-origin:0 0;">20</div>
<div class="t" style="left:868.25px;top:543.46px;font-size:12.57px;font-weight:400;color:#444;transform:scaleX(0.9324);transform-origin:0 0;">5</div>
<div class="t" style="left:968.25px;top:543.46px;font-size:12.57px;font-weight:400;color:#444;transform:scaleX(0.9324);transform-origin:0 0;">5</div>
<div class="t" style="left:1068.25px;top:543.46px;font-size:12.57px;font-weight:400;color:#444;transform:scaleX(0.9324);transform-origin:0 0;">5</div>
<div class="t" style="left:1168.25px;top:543.46px;font-size:12.57px;font-weight:400;color:#444;transform:scaleX(0.9324);transform-origin:0 0;">5</div>
<div class="t" style="left:1268.25px;top:543.46px;font-size:12.57px;font-weight:400;color:#444;transform:scaleX(0.9324);transform-origin:0 0;">0</div>
<div class="t" style="left:1368.25px;top:543.46px;font-size:12.57px;font-weight:400;color:#444;transform:scaleX(0.9324);transform-origin:0 0;">0</div>
<div class="t" style="left:456.34px;top:569.81px;font-size:12.57px;font-weight:400;color:#444;transform:scaleX(0.9324);transform-origin:0 0;">08:45</div>
<div class="t" style="left:556.84px;top:569.81px;font-size:12.57px;font-weight:400;color:#444;transform:scaleX(0.9324);transform-origin:0 0;">09:00</div>
<div class="t" style="left:664.98px;top:569.81px;font-size:12.57px;font-weight:400;color:#444;transform:scaleX(0.9324);transform-origin:0 0;">20</div>
<div class="t" style="left:764.98px;top:569.81px;font-size:12.57px;font-weight:400;color:#444;transform:scaleX(0.9324);transform-origin:0 0;">20</div>
<div class="t" style="left:868.25px;top:569.81px;font-size:12.57px;font-weight:400;color:#444;transform:scaleX(0.9324);transform-origin:0 0;">5</div>
<div class="t" style="left:968.25px;top:569.81px;font-size:12.57px;font-weight:400;color:#444;transform:scaleX(0.9324);transform-origin:0 0;">5</div>
<div class="t" style="left:1068.25px;top:569.81px;font-size:12.57px;font-weight:400;color:#444;transform:scaleX(0.9324);transform-origin:0 0;">5</div>
<div class="t" style="left:1168.25px;top:569.81px;font-size:12.57px;font-weight:400;color:#444;transform:scaleX(0.9324);transform-origin:0 0;">5</div>
<div class="t" style="left:1268.25px;top:569.81px;font-size:12.57px;font-weight:400;color:#444;transform:scaleX(0.9324);transform-origin:0 0;">0</div>
<div class="t" style="left:1368.25px;top:569.81px;font-size:12.57px;font-weight:400;color:#444;transform:scaleX(0.9324);transform-origin:0 0;">0</div>
<div class="t" style="left:456.34px;top:596.16px;font-size:12.57px;font-weight:400;color:#444;transform:scaleX(0.9324);transform-origin:0 0;">09:00</div>
<div class="t" style="left:556.84px;top:596.16px;font-size:12.57px;font-weight:400;color:#444;transform:scaleX(0.9324);transform-origin:0 0;">09:15</div>
<div class="t" style="left:668.25px;top:596.16px;font-size:12.57px;font-weight:400;color:#444;transform:scaleX(0.9324);transform-origin:0 0;">0</div>
<div class="t" style="left:768.25px;top:596.16px;font-size:12.57px;font-weight:400;color:#444;transform:scaleX(0.9324);transform-origin:0 0;">0</div>
<div class="t" style="left:868.25px;top:596.16px;font-size:12.57px;font-weight:400;color:#444;transform:scaleX(0.9324);transform-origin:0 0;">0</div>
<div class="t" style="left:968.25px;top:596.16px;font-size:12.57px;font-weight:400;color:#444;transform:scaleX(0.9324);transform-origin:0 0;">0</div>
<div class="t" style="left:1068.25px;top:596.16px;font-size:12.57px;font-weight:400;color:#444;transform:scaleX(0.9324);transform-origin:0 0;">0</div>
<div class="t" style="left:1168.25px;top:596.16px;font-size:12.57px;font-weight:400;color:#444;transform:scaleX(0.9324);transform-origin:0 0;">0</div>
<div class="t" style="left:1268.25px;top:596.16px;font-size:12.57px;font-weight:400;color:#444;transform:scaleX(0.9324);transform-origin:0 0;">0</div>
<div class="t" style="left:1368.25px;top:596.16px;font-size:12.57px;font-weight:400;color:#444;transform:scaleX(0.9324);transform-origin:0 0;">0</div>
<div class="t" style="left:456.34px;top:622.51px;font-size:12.57px;font-weight:400;color:#444;transform:scaleX(0.9324);transform-origin:0 0;">09:15</div>
<div class="t" style="left:556.84px;top:622.51px;font-size:12.57px;font-weight:400;color:#444;transform:scaleX(0.9324);transform-origin:0 0;">09:30</div>
<div class="t" style="left:668.25px;top:622.51px;font-size:12.57px;font-weight:400;color:#444;transform:scaleX(0.9324);transform-origin:0 0;">0</div>
<div class="t" style="left:768.25px;top:622.51px;font-size:12.57px;font-weight:400;color:#444;transform:scaleX(0.9324);transform-origin:0 0;">0</div>
<div class="t" style="left:868.25px;top:622.51px;font-size:12.57px;font-weight:400;color:#444;transform:scaleX(0.9324);transform-origin:0 0;">0</div>
<div class="t" style="left:968.25px;top:622.51px;font-size:12.57px;font-weight:400;color:#444;transform:scaleX(0.9324);transform-origin:0 0;">0</div>
<div class="t" style="left:1068.25px;top:622.51px;font-size:12.57px;font-weight:400;color:#444;transform:scaleX(0.9324);transform-origin:0 0;">0</div>
<div class="t" style="left:1168.25px;top:622.51px;font-size:12.57px;font-weight:400;color:#444;transform:scaleX(0.9324);transform-origin:0 0;">0</div>
<div class="t" style="left:1268.25px;top:622.51px;font-size:12.57px;font-weight:400;color:#444;transform:scaleX(0.9324);transform-origin:0 0;">0</div>
<div class="t" style="left:1368.25px;top:622.51px;font-size:12.57px;font-weight:400;color:#444;transform:scaleX(0.9324);transform-origin:0 0;">0</div>
<div class="t" style="left:456.34px;top:648.86px;font-size:12.57px;font-weight:400;color:#444;transform:scaleX(0.9324);transform-origin:0 0;">09:30</div>
<div class="t" style="left:556.84px;top:648.86px;font-size:12.57px;font-weight:400;color:#444;transform:scaleX(0.9324);transform-origin:0 0;">09:45</div>
<div class="t" style="left:668.25px;top:648.86px;font-size:12.57px;font-weight:400;color:#444;transform:scaleX(0.9324);transform-origin:0 0;">0</div>
<div class="t" style="left:768.25px;top:648.86px;font-size:12.57px;font-weight:400;color:#444;transform:scaleX(0.9324);transform-origin:0 0;">0</div>
<div class="t" style="left:868.25px;top:648.86px;font-size:12.57px;font-weight:400;color:#444;transform:scaleX(0.9324);transform-origin:0 0;">0</div>
<div class="t" style="left:968.25px;top:648.86px;font-size:12.57px;font-weight:400;color:#444;transform:scaleX(0.9324);transform-origin:0 0;">0</div>
<div class="t" style="left:1068.25px;top:648.86px;font-size:12.57px;font-weight:400;color:#444;transform:scaleX(0.9324);transform-origin:0 0;">0</div>
<div class="t" style="left:1168.25px;top:648.86px;font-size:12.57px;font-weight:400;color:#444;transform:scaleX(0.9324);transform-origin:0 0;">0</div>
<div class="t" style="left:1268.25px;top:648.86px;font-size:12.57px;font-weight:400;color:#444;transform:scaleX(0.9324);transform-origin:0 0;">0</div>
<div class="t" style="left:1368.25px;top:648.86px;font-size:12.57px;font-weight:400;color:#444;transform:scaleX(0.9324);transform-origin:0 0;">0</div>
<div style="position:absolute;left:420px;top:218px;width:1017px;height:448px;border:1px solid #d4d4d4;border-radius:2px;box-shadow:0 1px 1px rgba(0,0,0,0.05)"></div>
<div style="position:absolute;left:0px;top:703px;width:1567px;height:47px;background:#e1e1e1"></div>
<div class="t" style="left:23.30px;top:720.90px;font-size:13.83px;font-weight:400;color:#505050;transform:scaleX(0.9917);transform-origin:0 0;">© 2024 - Time Care AB</div>
<svg style="position:absolute;left:1446px;top:719px" width="14" height="14" viewBox="0 0 14 14"><circle cx="7" cy="7" r="7" fill="#0b77a3"/><text x="7" y="11.2" text-anchor="middle" font-family="Liberation Sans" font-weight="700" font-size="11" fill="#fff">?</text></svg>
<div style="position:absolute;left:1468px;top:713px;width:87px;height:31px;background:#f4f4f4;border:1px solid #b8b8b8;border-radius:2px"></div>
<div class="t" style="left:1480.20px;top:722.38px;font-size:13.14px;font-weight:400;color:#666;">Töm cache</div>
</body></html>
